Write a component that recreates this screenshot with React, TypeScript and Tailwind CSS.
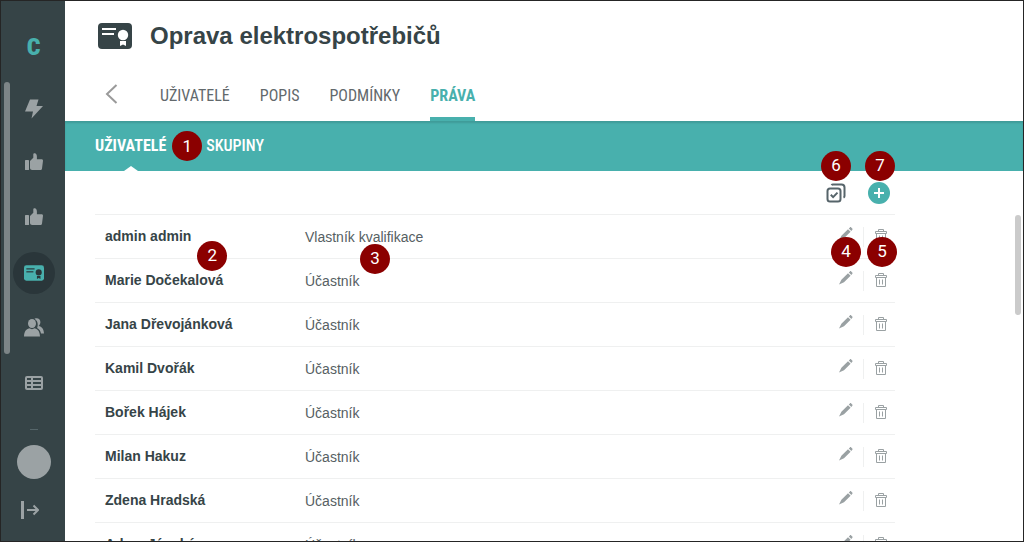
import type { ReactNode } from 'react';

const people = [
  { name: 'admin admin', role: 'Vlastník kvalifikace' },
  { name: 'Marie Dočekalová', role: 'Účastník' },
  { name: 'Jana Dřevojánková', role: 'Účastník' },
  { name: 'Kamil Dvořák', role: 'Účastník' },
  { name: 'Bořek Hájek', role: 'Účastník' },
  { name: 'Milan Hakuz', role: 'Účastník' },
  { name: 'Zdena Hradská', role: 'Účastník' },
  { name: 'Adam Jánský', role: 'Účastník' },
];

const tabs = ['UŽIVATELÉ', 'POPIS', 'PODMÍNKY', 'PRÁVA'];

function Marker({ n, className }: { n: number; className: string }) {
  return (
    <span
      className={`absolute z-10 flex size-[30px] items-center justify-center rounded-full bg-[#8b0000] font-[Roboto,sans-serif] text-[17px] font-normal leading-none text-white ${className}`}
    >
      {n}
    </span>
  );
}

function BoltIcon() {
  return (
    <svg width="18" height="22" viewBox="0 -2 18 22" fill="currentColor">
      <path d="M5 .5h8.500L11.500 7h6.500L6.500 19.500 8 12.500H0z" />
    </svg>
  );
}

function ThumbIcon() {
  return (
    <svg width="18" height="20" viewBox="0 0 18 20" fill="currentColor">
      <rect x="0" y="7" width="4" height="10" rx=".6" />
      <path d="M5 8 8.300 4.800V1.200C8.300.3 9.300 0 10 .2c1.400.4 1.900 2 1.900 3.300V6.200h4.600c1 0 1.500.7 1.500 1.600l-1 7.600c-.1 1-.8 1.600-1.800 1.600H7.200C6 17 5 16.300 5 15z" />
    </svg>
  );
}

function CertificateIcon({ className, mark }: { className: string; mark: string }) {
  return (
    <svg viewBox="0 0 34 26" className={className}>
      <rect width="34" height="26" rx="4" fill="currentColor" />
      <g fill={mark}>
        <rect x="4" y="5" width="14" height="2" />
        <rect x="4" y="10" width="12" height="2" />
        <circle cx="25" cy="12" r="5.200" />
        <path d="M22 18h6v5l-3-1.600L22 23z" />
      </g>
    </svg>
  );
}

function UsersIcon() {
  return (
    <svg width="20" height="19" viewBox="0 0 20 19" fill="currentColor">
      <path d="M10.500.8C14-.8 17 1.700 16.300 5c-.3 1.500-1 2.300-1.700 3 3.200.7 5.200 3 5.400 7.500h-3c-.5-2.500-1.600-4.300-3.900-5.600C14.300 7 14 2.800 10.500.8z" />
      <ellipse cx="8" cy="5.500" rx="4" ry="4.600" />
      <path d="M0 18.500C.2 13.500 2 11.300 5.300 10.300c1.700 1.100 3.700 1.100 5.400 0 3.300 1 5.100 3.200 5.300 8.200z" />
    </svg>
  );
}

function TableIcon() {
  return (
    <svg width="18" height="14" viewBox="0 0 18 14">
      <rect width="18" height="14" rx="2" fill="currentColor" />
      <g fill="#364447">
        <path d="M2 2h4v2H2zM2 6h4v2H2zM2 10h4v2H2zM8 2h8v2H8zM8 6h8v2H8zM8 10h8v2H8z" />
      </g>
    </svg>
  );
}

function PencilIcon() {
  return (
    <svg width="14" height="14" viewBox="0 0 14 14" fill="currentColor">
      <path d="M9 2.200 11.600 4.800 5 11.300 0 13.600 2.400 8.800zM9.800 1.400 10.900.4c.4-.4.9-.4 1.300 0l1.100 1.100c.4.4.4.9 0 1.300l-1 1.200z" />
    </svg>
  );
}

function TrashIcon() {
  return (
    <svg width="12" height="14" viewBox="0 0 12 14" fill="none" stroke="currentColor">
      <path d="M3.500 2.500v-2h5v2M.5 2.500h11v2H.5zM1.500 4.500v9h9v-9M4.500 6.500v5M7.500 6.500v5" />
    </svg>
  );
}

function SelectAllIcon() {
  return (
    <svg width="20" height="20" viewBox="0 0 20 20" fill="none" stroke="currentColor" strokeWidth="2">
      <rect x="1.500" y="5.500" width="13" height="13" rx="2.500" />
      <path d="M5.500 2.200Q6 1.500 7 1.500h8.500q3 0 3 3V13q0 1.200-1 1.700" />
      <path d="m4.800 11.800 2.300 2.300 4.400-4.500" />
    </svg>
  );
}

function NavItem({ label, active, children }: { label: string; active?: boolean; children: ReactNode }) {
  return (
    <li className="flex h-[55px] items-center justify-center">
      <a
        href="#"
        aria-label={label}
        className={`flex size-[42px] items-center justify-center rounded-full ${active ? 'bg-[#2a363a] text-[#48b0ad]' : ''}`}
      >
        {children}
      </a>
    </li>
  );
}

function Sidebar() {
  return (
    <aside className="relative flex w-16 shrink-0 flex-col bg-[#364447] pl-px text-[#9ba2a4]">
      <div className="absolute left-[3px] top-[81px] h-[272px] w-[6px] rounded-full bg-[#7d8587]" />
      <a
        href="#"
        className="flex h-[79px] shrink-0 items-center justify-center pt-3 font-['Roboto_Condensed',Roboto,sans-serif] text-2xl font-black text-[#48b0ad]"
      >
        C
      </a>
      <nav className="min-h-0 flex-1 overflow-hidden">
        <ul>
          <NavItem label="Aktivity"><BoltIcon /></NavItem>
          <NavItem label="Hodnocení"><ThumbIcon /></NavItem>
          <NavItem label="Doporučení"><ThumbIcon /></NavItem>
          <NavItem label="Kvalifikace" active>
            <CertificateIcon className="h-4 w-5" mark="#2a363a" />
          </NavItem>
          <NavItem label="Uživatelé"><UsersIcon /></NavItem>
          <NavItem label="Přehledy"><TableIcon /></NavItem>
        </ul>
        <hr className="mx-auto mt-[19px] w-2 border-[#56666a]" />
      </nav>
      <div className="flex shrink-0 flex-col items-center gap-[22px] pb-[22px]">
        <button aria-label="Profil" className="size-[34px] rounded-full bg-[#9ba2a4]" />
        <button aria-label="Odhlásit" className="-ml-2">
          <svg width="18" height="18" viewBox="0 0 18 18" fill="none" stroke="currentColor" strokeWidth="2">
            <path d="M1.500 0v18" strokeWidth="3" />
            <path d="M6 9h11M12.500 4.500 17 9l-4.500 4.500" />
          </svg>
        </button>
      </div>
    </aside>
  );
}

export default function App() {
  return (
    <div className="flex h-screen overflow-hidden border border-[#252525] bg-white font-['Liberation_Sans',Arial,sans-serif] text-[#364447]">
      <Sidebar />
      <main className="flex min-w-0 flex-1 flex-col">
        <header className="flex h-[120px] shrink-0 flex-col justify-between px-[33px] pt-[19px]">
          <div className="flex items-center gap-[18px]">
            <CertificateIcon className="h-[26px] w-[34px]" mark="#ffffff" />
            <h1 className="text-2xl font-bold">Oprava elektrospotřebičů</h1>
          </div>
          <nav className="flex items-start font-['Roboto_Condensed',Roboto,sans-serif] text-base">
            <button aria-label="Zpět" className="ml-[7px] mr-[42px] pt-px text-[#9a9a9a]">
              <svg width="13" height="20" viewBox="0 0 13 20" fill="none" stroke="currentColor" strokeWidth="2">
                <path d="M11.500 1 2 10l9.500 9" />
              </svg>
            </button>
            <div className="flex gap-[30px]">
              {tabs.map((tab) => (
                <a
                  key={tab}
                  href="#"
                  className={`h-[38px] border-b-4 pt-px ${tab === 'PRÁVA' ? 'border-[#48b0ad] font-bold text-[#48b0ad]' : 'border-transparent text-[#62696c]'}`}
                >
                  {tab}
                </a>
              ))}
            </div>
          </nav>
        </header>

        <nav className="flex h-[50px] shrink-0 gap-10 bg-[#48b0ad] pl-[30px] font-['Roboto_Condensed',Roboto,sans-serif] text-base leading-[50px] text-white shadow-[inset_0_2px_2px_rgba(0,0,0,0.12)]">
          <a href="#" className="relative font-bold">
            UŽIVATELÉ
            <svg width="14" height="5" viewBox="0 0 14 5" className="absolute bottom-0 left-1/2 -translate-x-1/2">
              <path d="M0 5 7 0l7 5z" fill="#fff" />
            </svg>
            <Marker n={1} className="-right-[36px] top-[10px]" />
          </a>
          <a href="#" className="font-medium">SKUPINY</a>
        </nav>

        <div className="flex min-h-0 flex-1">
          <section className="min-w-0 flex-1 pl-[30px]">
            <div className="max-w-[800px]">
              <div className="flex h-[43px] items-center justify-end gap-[22px] pr-[5px]">
                <button aria-label="Vybrat vše" className="relative text-[#56646a]">
                  <SelectAllIcon />
                  <Marker n={6} className="-left-[5px] -top-[32px]" />
                </button>
                <button aria-label="Přidat" className="relative flex size-[22px] items-center justify-center rounded-full bg-[#48b0ad] text-white">
                  <svg width="10" height="10" viewBox="0 0 10 10" stroke="currentColor" strokeWidth="2">
                    <path d="M5 0v10M0 5h10" />
                  </svg>
                  <Marker n={7} className="-left-[3px] -top-[31px]" />
                </button>
              </div>

              <table className="w-full table-fixed border-separate border-spacing-0">
                <tbody>
                  {people.map((p, i) => (
                    <tr key={p.name} className="h-11">
                      <td className="w-[200px] border-t border-[#eff0f0] pb-[2px] pl-[10px] text-sm font-bold">
                        <span className="relative">
                          {p.name}
                          {i === 0 && <Marker n={2} className="-right-[36px] top-[13px]" />}
                        </span>
                      </td>
                      <td className="border-t border-[#eff0f0] pl-[10px] text-sm text-[#566063]">
                        <span className="relative">
                          {p.role}
                          {i === 0 && <Marker n={3} className="left-[55px] top-[15px]" />}
                        </span>
                      </td>
                      <td className="w-[70px] border-t border-[#eff0f0]">
                        <div className="flex h-5 items-center text-[#9aa1a3]">
                          <button aria-label={`Upravit ${p.name}`} className="relative mb-[6px] ml-[14px]">
                            <PencilIcon />
                            {i === 0 && <Marker n={4} className="-left-[8px] top-[10px]" />}
                          </button>
                          <span className="ml-[10px] h-5 w-px bg-[#eff0f0]" />
                          <button aria-label={`Smazat ${p.name}`} className="relative mb-[2px] ml-[11px]">
                            <TrashIcon />
                            {i === 0 && <Marker n={5} className="-left-[8px] top-[8px]" />}
                          </button>
                        </div>
                      </td>
                    </tr>
                  ))}
                </tbody>
              </table>
            </div>
          </section>
          <div className="mr-[2px] mt-[44px] h-[100px] w-[6px] shrink-0 rounded-full bg-[#cbcbcb]" />
        </div>
      </main>
    </div>
  );
}
